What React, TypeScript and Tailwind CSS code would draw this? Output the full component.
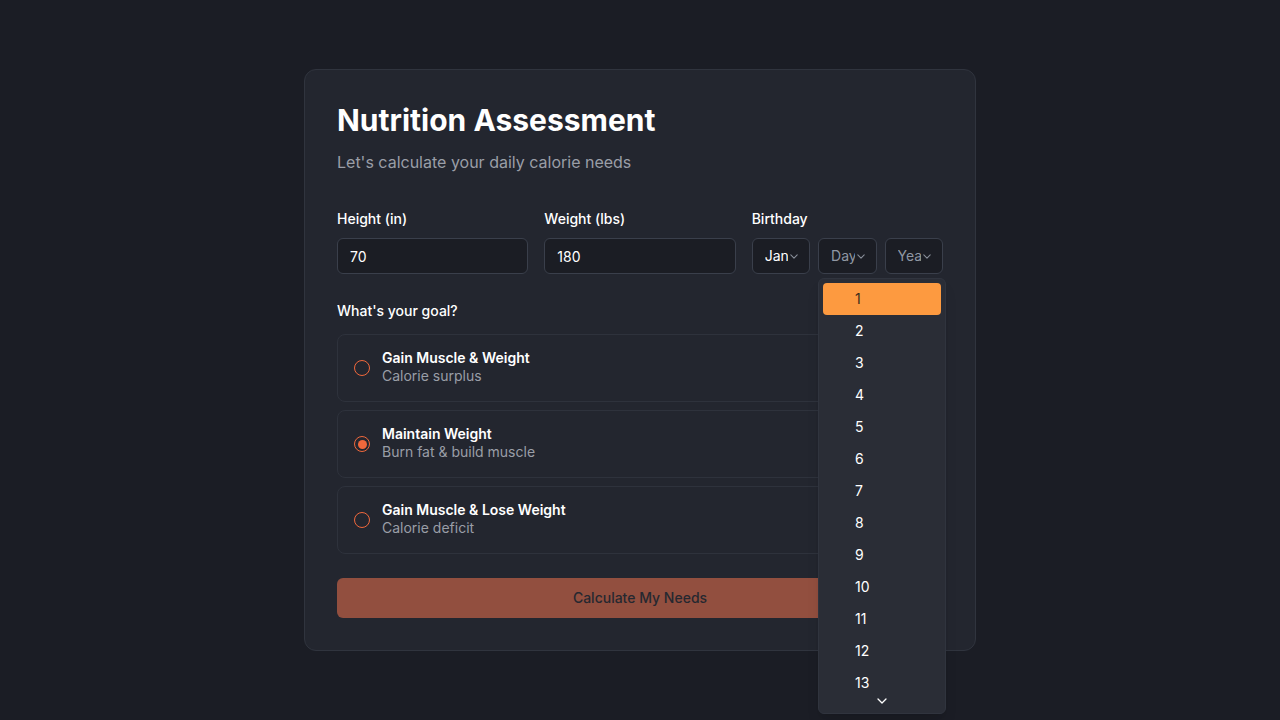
import React, { useState } from 'react';

type Goal = { id: string; title: string; subtitle: string };

const goals: Goal[] = [
  { id: 'gain', title: 'Gain Muscle & Weight', subtitle: 'Calorie surplus' },
  { id: 'maintain', title: 'Maintain Weight', subtitle: 'Burn fat & build muscle' },
  { id: 'recomp', title: 'Gain Muscle & Lose Weight', subtitle: 'Calorie deficit' },
];

const days = Array.from({ length: 13 }, (_, i) => i + 1);

const Chevron: React.FC<{ className?: string }> = ({ className }) => (
  <svg viewBox="0 0 10 6" className={className} fill="none" stroke="currentColor" strokeWidth="1.3" strokeLinecap="round" strokeLinejoin="round">
    <path d="M1 1l4 4 4-4" />
  </svg>
);

const FakeSelect: React.FC<{ value: string; placeholder?: boolean }> = ({ value, placeholder }) => (
  <div className="flex h-9 items-center rounded-md border border-[#3a3f4b] bg-[#1b1d24] pl-3 pr-[11px]">
    <span className={`min-w-0 flex-1 overflow-hidden whitespace-nowrap text-sm ${placeholder ? 'text-[#9097a3]' : 'text-white'}`}>
      {value}
    </span>
    <Chevron className="ml-[2px] h-[5px] w-[8px] shrink-0 text-[#8a909b]" />
  </div>
);

const Radio: React.FC<{ checked: boolean }> = ({ checked }) => (
  <span className="flex h-4 w-4 shrink-0 items-center justify-center rounded-full border-[1.5px] border-[#f0683c]">
    {checked && <span className="h-[9px] w-[9px] rounded-full bg-[#f0683c]" />}
  </span>
);

const App: React.FC = () => {
  const [goal, setGoal] = useState('maintain');
  const [height, setHeight] = useState('70');
  const [weight, setWeight] = useState('180');

  return (
    <div className="min-h-screen bg-[#1b1d25] pt-[69px] font-['Inter',sans-serif] text-white">
      <div className="mx-auto w-[672px] rounded-xl border border-[#30343e] bg-[#23262f] p-8">
        <h1 className="text-3xl font-bold leading-9 text-white">Nutrition Assessment</h1>
        <p className="mt-3 text-base text-[#9a9ea7]">Let's calculate your daily calorie needs</p>

        <div className="mt-[35px] grid grid-cols-3 gap-4">
          <div>
            <label className="mb-[9px] block text-sm font-medium leading-5 text-white">Height (in)</label>
            <input
              value={height}
              onChange={e => setHeight(e.target.value)}
              className="h-9 w-full rounded-md border border-[#3a3f4b] bg-[#1b1d24] px-3 text-sm text-white outline-none"
            />
          </div>
          <div>
            <label className="mb-[9px] block text-sm font-medium leading-5 text-white">Weight (lbs)</label>
            <input
              value={weight}
              onChange={e => setWeight(e.target.value)}
              className="h-9 w-full rounded-md border border-[#3a3f4b] bg-[#1b1d24] px-3 text-sm text-white outline-none"
            />
          </div>
          <div>
            <label className="mb-[9px] block text-sm font-medium leading-5 text-white">Birthday</label>
            <div className="grid grid-cols-3 gap-2">
              <FakeSelect value="January" />
              <div className="relative">
                <FakeSelect value="Day" placeholder />
                {/* open day menu */}
                <div className="absolute left-0 top-[40px] z-10 w-[128px] rounded-md border border-[#30343e] bg-[#2a2d36] p-1 pb-[6px] shadow-lg">
                  {days.map(d => (
                    <div
                      key={d}
                      className={`flex h-8 items-center rounded pl-8 text-sm ${d === 1 ? 'bg-[#fd9a40] text-[#3a2a1c]' : 'text-white'}`}
                    >
                      {d}
                    </div>
                  ))}
                  <div className="-mt-[4px] flex h-3 items-center justify-center">
                    <Chevron className="h-[6px] w-[10px] text-white" />
                  </div>
                </div>
              </div>
              <FakeSelect value="Year" placeholder />
            </div>
          </div>
        </div>

        <p className="mt-[27px] text-sm font-medium leading-5 text-white">What's your goal?</p>
        <div className="mt-[13px] flex flex-col gap-2">
          {goals.map(g => (
            <button
              key={g.id}
              onClick={() => setGoal(g.id)}
              className="flex h-[68px] items-center gap-3 rounded-lg border border-[#2e323c] bg-[#23262f] px-4 text-left"
            >
              <Radio checked={goal === g.id} />
              <span className="mb-[5px] flex flex-col">
                <span className="text-sm font-semibold leading-5 text-white">{g.title}</span>
                <span className="text-sm leading-4 text-[#9a9ea7]">{g.subtitle}</span>
              </span>
            </button>
          ))}
        </div>

        <button className="mt-6 h-10 w-full rounded-md bg-[#924f3f] text-sm font-medium text-[#262830]">
          Calculate My Needs
        </button>
      </div>
    </div>
  );
};

export default App;
